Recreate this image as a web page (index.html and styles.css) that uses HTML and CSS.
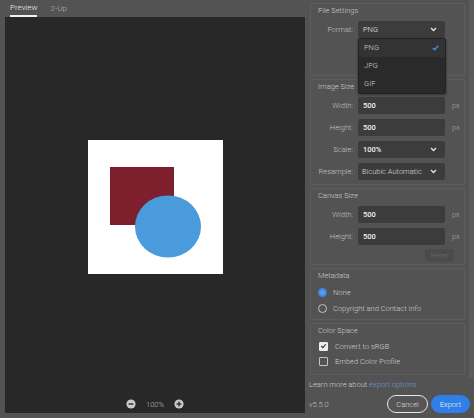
FILE: index.html
```html
<!DOCTYPE html>
<html>
<head>
    <link rel="stylesheet" href="styles.css">
</head>
<body>
    <div class="app">
        <div class="left">
            <div class="tabs">
                <span class="tab active">Preview</span>
                <span class="tab">2-Up</span>
            </div>
            <div class="preview">
                <div class="canvas-area">
                    <svg class="artboard" width="135" height="134" viewBox="0 0 135 134">
                        <rect x="0" y="0" width="135" height="134" fill="#ffffff"/>
                        <rect x="22" y="27" width="64" height="58" fill="#7e1f2d"/>
                        <ellipse cx="80" cy="86.5" rx="33" ry="31" fill="#4a9bdb"/>
                    </svg>
                </div>
                <div class="zoombar">
                    <svg width="10" height="10" viewBox="0 0 10 10"><circle cx="5" cy="5" r="4.6" fill="#c9c9c9"/><rect x="2.6" y="4.3" width="4.8" height="1.4" fill="#2b2b2b"/></svg>
                    <span class="zoom-val">100%</span>
                    <svg width="10" height="10" viewBox="0 0 10 10"><circle cx="5" cy="5" r="4.6" fill="#c9c9c9"/><rect x="2.6" y="4.3" width="4.8" height="1.4" fill="#2b2b2b"/><rect x="4.3" y="2.6" width="1.4" height="4.8" fill="#2b2b2b"/></svg>
                </div>
            </div>
        </div>

        <div class="right">
            <div class="scroll">
                <div class="settings">
                    <div class="section file-section">
                        <div class="section-title">File Settings</div>
                        <div class="rows">
                            <div class="row">
                                <span class="label">Format:</span>
                                <div class="select-wrap">
                                    <div class="field select">PNG
                                        <svg class="chev" width="7" height="5" viewBox="0 0 7 5"><path d="M1 1 L3.5 3.5 L6 1" fill="none" stroke="#e6e6e6" stroke-width="1.3"/></svg>
                                    </div>
                                    <div class="menu">
                                        <div class="menu-item selected">PNG
                                            <svg width="7" height="6" viewBox="0 0 7 6"><path d="M0.8 3 L2.7 4.8 L6.2 0.8" fill="none" stroke="#4a8fe3" stroke-width="1.4"/></svg>
                                        </div>
                                        <div class="menu-item">JPG</div>
                                        <div class="menu-item">GIF</div>
                                    </div>
                                </div>
                            </div>
                        </div>
                    </div>

                    <div class="section">
                        <div class="section-title">Image Size</div>
                        <div class="rows">
                            <div class="row"><span class="label">Width:</span><div class="field">500</div><span class="unit">px</span></div>
                            <div class="row"><span class="label">Height:</span><div class="field">500</div><span class="unit">px</span></div>
                            <div class="row"><span class="label">Scale:</span><div class="field select">100%
                                <svg class="chev" width="7" height="5" viewBox="0 0 7 5"><path d="M1 1 L3.5 3.5 L6 1" fill="none" stroke="#e6e6e6" stroke-width="1.3"/></svg></div></div>
                            <div class="row"><span class="label">Resample:</span><div class="field select light">Bicubic Automatic
                                <svg class="chev" width="7" height="5" viewBox="0 0 7 5"><path d="M1 1 L3.5 3.5 L6 1" fill="none" stroke="#e6e6e6" stroke-width="1.3"/></svg></div></div>
                        </div>
                    </div>

                    <div class="section">
                        <div class="section-title">Canvas Size</div>
                        <div class="rows canvas-rows">
                            <div class="row"><span class="label">Width:</span><div class="field">500</div><span class="unit">px</span></div>
                            <div class="row"><span class="label">Height:</span><div class="field">500</div><span class="unit">px</span></div>
                            <div class="reset-row"><button class="reset">Reset</button></div>
                        </div>
                    </div>

                    <div class="section">
                        <div class="section-title">Metadata</div>
                        <div class="options">
                            <div class="option"><span class="radio on"></span>None</div>
                            <div class="option"><span class="radio"></span>Copyright and Contact Info</div>
                        </div>
                    </div>

                    <div class="section">
                        <div class="section-title">Color Space</div>
                        <div class="options checks">
                            <div class="option"><span class="check on"><svg width="8" height="8" viewBox="0 0 8 8"><path d="M1.5 4 L3.3 5.8 L6.6 2" fill="none" stroke="#333" stroke-width="1.3"/></svg></span>Convert to sRGB</div>
                            <div class="option"><span class="check"></span>Embed Color Profile</div>
                        </div>
                    </div>
                </div>
                <div class="scrollbar"></div>
            </div>
            <div class="learn">Learn more about <span class="link">export options</span></div>
            <div class="footer">
                <span class="version">v5.5.0</span>
                <button class="btn cancel">Cancel</button>
                <button class="btn export">Export</button>
            </div>
        </div>
    </div>
</body>
</html>
```

FILE: styles.css
```css
* {
    box-sizing: border-box;
}

body {
    margin: 0;
    background: #535353;
    font-family: Roboto, "Liberation Sans", sans-serif;
    font-size: 7.5px;
    font-weight: 300;
    color: #c8c8c8;
}

.app {
    display: flex;
    width: 474px;
    height: 418px;
    overflow: hidden;
}

/* preview side */
.left {
    width: 305px;
    padding-left: 5px;
}

.tabs {
    height: 17px;
    display: flex;
    gap: 13px;
    padding-left: 5px;
}

.tab {
    height: 17px;
    line-height: 17px;
    color: #b9b9b9;
    font-size: 8px;
}

.tab.active {
    color: #f0f0f0;
    border-bottom: 2px solid #f2f2f2;
    line-height: 16px;
}

.preview {
    width: 300px;
    height: 396px;
    background: #282828;
    display: flex;
    flex-direction: column;
}

.canvas-area {
    height: 379px;
    display: flex;
    align-items: center;
    justify-content: center;
}

.artboard {
    display: block;
}

.zoombar {
    height: 17px;
    display: flex;
    align-items: center;
    justify-content: center;
    gap: 7px;
    padding-bottom: 1px;
}

.zoombar svg {
    display: block;
}

.zoom-val {
    color: #bdbdbd;
    font-size: 7.5px;
    width: 24px;
    text-align: center;
}

/* settings side */
.right {
    width: 169px;
    display: flex;
    flex-direction: column;
}

.scroll {
    height: 378px;
    display: flex;
}

.settings {
    width: 164px;
    padding: 3px 4px 0 5px;
    display: flex;
    flex-direction: column;
    gap: 3px;
}

.scrollbar {
    width: 5px;
    background: #5b5b5b;
}

.section {
    border: 1px solid #5d5d5d;
    border-radius: 2px;
}

.section-title {
    height: 14px;
    line-height: 14px;
    padding-left: 7px;
    color: #cdcdcd;
}

.rows {
    padding: 3px 0 4px;
    display: flex;
    flex-direction: column;
    gap: 5px;
}

.file-section .rows {
    padding: 3px 0 37px;
}

.canvas-rows {
    padding-bottom: 2px;
}

.row {
    display: flex;
    align-items: center;
    height: 17px;
}

.label {
    width: 42px;
    text-align: right;
    margin-right: 5px;
    color: #c4c4c4;
}

.field {
    width: 87px;
    height: 17px;
    background: #3c3c3c;
    border-radius: 2px;
    padding-left: 5px;
    line-height: 17px;
    color: #f2f2f2;
    font-weight: 500;
    position: relative;
}

.field.light {
    font-weight: 300;
    color: #dcdcdc;
    padding-left: 4px;
}

.select-wrap {
    position: relative;
}

.select .chev {
    position: absolute;
    right: 8px;
    top: 6px;
}

.file-section .field {
    font-weight: 300;
    color: #e4e4e4;
}

.unit {
    margin-left: 7px;
    color: #a8a8a8;
}

.menu {
    position: absolute;
    left: 0;
    top: 17px;
    width: 88px;
    height: 56px;
    background: #2a2a2a;
    border: 1px solid #222;
    border-radius: 2px;
    box-shadow: 0 1px 3px rgba(0, 0, 0, 0.4);
    z-index: 2;
}

.menu-item {
    height: 18px;
    line-height: 18px;
    padding-left: 5px;
    color: #d2d2d2;
    display: flex;
    align-items: center;
    justify-content: space-between;
    padding-right: 6px;
}

.menu-item.selected {
    background: #333333;
}

.reset-row {
    display: flex;
    justify-content: flex-end;
    padding-right: 10px;
    margin-top: -1px;
}

.reset {
    width: 29px;
    height: 13px;
    padding: 0;
    border: none;
    border-radius: 2px;
    background: #4b4b4b;
    color: #6a6a6a;
    font-family: Roboto, "Liberation Sans", sans-serif;
    font-size: 7px;
    font-weight: 300;
}

.options {
    padding: 3px 0 4px 7px;
    display: flex;
    flex-direction: column;
    gap: 3px;
}

.checks {
    padding: 2px 0 7px 8px;
}

.option {
    height: 13px;
    display: flex;
    align-items: center;
    gap: 6px;
    color: #cfcfcf;
}

.checks .option {
    height: 12px;
    gap: 7px;
}

.radio {
    width: 9px;
    height: 9px;
    border-radius: 50%;
    border: 1px solid #c4c4c4;
}

.radio.on {
    border: 2px solid #3f87e0;
    background: #5b9cec;
}

.check {
    width: 9px;
    height: 9px;
    border: 1px solid #c4c4c4;
    border-radius: 1px;
    display: flex;
    align-items: center;
    justify-content: center;
}

.check.on {
    background: #ececec;
    border-color: #ececec;
}

.learn {
    height: 13px;
    line-height: 13px;
    padding-left: 4px;
    color: #cfcfcf;
}

.link {
    color: #6c9bd8;
}

.footer {
    display: flex;
    align-items: center;
    padding: 4px 4px 5px 4px;
    height: 27px;
}

.version {
    color: #c0c0c0;
    flex: 1;
}

.btn {
    height: 18px;
    border-radius: 9px;
    font-family: Roboto, "Liberation Sans", sans-serif;
    font-size: 7.5px;
    font-weight: 300;
    padding: 0;
}

.cancel {
    width: 41px;
    background: #555;
    border: 1.5px solid #e8e8e8;
    color: #dcdcdc;
    margin-right: 3px;
}

.export {
    width: 39px;
    background: #2f7fe6;
    border: none;
    color: #f4f4f4;
}
```
